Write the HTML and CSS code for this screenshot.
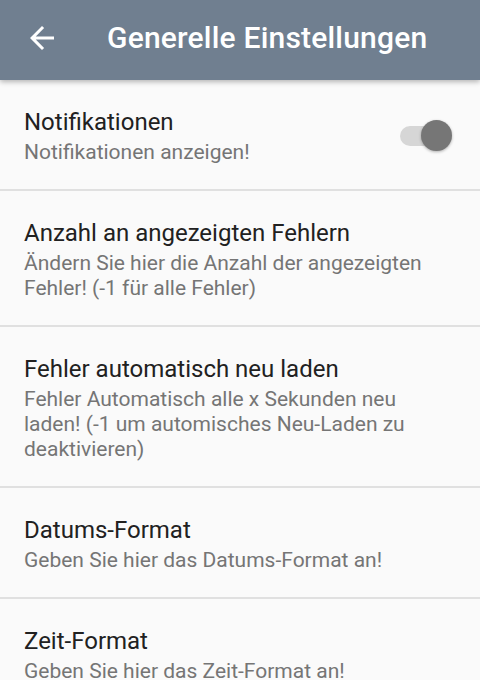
FILE: index.html
```html
<!DOCTYPE html>
<html lang="de">
<head>
<meta charset="utf-8">
<link rel="stylesheet" href="styles.css">
</head>
<body>
<div class="app">
  <header class="toolbar">
    <span class="back">
      <svg width="36" height="36" viewBox="0 0 24 24"><path d="M20 11H7.83l5.59-5.59L12 4l-8 8 8 8 1.41-1.41L7.83 13H20v-2z" fill="#fff"/></svg>
    </span>
    <h1 class="title">Generelle Einstellungen</h1>
  </header>
  <main class="list">
    <div class="item">
      <div class="text">
        <div class="item-title">Notifikationen</div>
        <div class="item-sub">Notifikationen anzeigen!</div>
      </div>
      <div class="switch"><span class="track"></span><span class="thumb"></span></div>
    </div>
    <div class="item">
      <div class="text">
        <div class="item-title">Anzahl an angezeigten Fehlern</div>
        <div class="item-sub">Ändern Sie hier die Anzahl der angezeigten Fehler! (-1 für alle Fehler)</div>
      </div>
    </div>
    <div class="item">
      <div class="text">
        <div class="item-title">Fehler automatisch neu laden</div>
        <div class="item-sub">Fehler Automatisch alle x Sekunden neu laden! (-1 um automisches Neu-Laden zu deaktivieren)</div>
      </div>
    </div>
    <div class="item">
      <div class="text">
        <div class="item-title">Datums-Format</div>
        <div class="item-sub">Geben Sie hier das Datums-Format an!</div>
      </div>
    </div>
    <div class="item">
      <div class="text">
        <div class="item-title">Zeit-Format</div>
        <div class="item-sub">Geben Sie hier das Zeit-Format an!</div>
      </div>
    </div>
  </main>
</div>
</body>
</html>
```
FILE: styles.css
```css
html, body {
  margin: 0;
  padding: 0;
  background: #fafafa;
  font-family: Roboto, "Noto Sans", sans-serif;
}
.app {
  width: 480px;
  height: 680px;
  overflow: hidden;
  display: flex;
  flex-direction: column;
}
.toolbar {
  position: relative;
  z-index: 1;
  height: 80px;
  box-sizing: border-box;
  padding-bottom: 4px;
  flex: none;
  background: #707f90;
  display: flex;
  align-items: center;
  box-shadow: 0 2px 5px rgba(0,0,0,0.28);
}
.back {
  width: 36px;
  height: 36px;
  margin-left: 24px;
  display: flex;
}
.title {
  margin: 0 0 0 47px;
  color: #fff;
  font-size: 30px;
  font-weight: 500;
  line-height: 36px;
  letter-spacing: 0.2px;
}
.list {
  display: flex;
  flex-direction: column;
}
.item {
  display: flex;
  align-items: center;
  padding: 26px 24px 24px 24px;
  border-bottom: 2px solid #e0e0e0;
}
.text {
  flex: 1;
  min-width: 0;
}
.item-title {
  font-size: 24px;
  line-height: 32px;
  color: #212121;
}
.item-sub {
  margin-top: 2px;
  font-size: 21px;
  line-height: 25px;
  color: #757575;
}
.switch {
  position: relative;
  width: 52px;
  height: 34px;
  margin-right: 4px;
  flex: none;
}
.track {
  position: absolute;
  left: 0;
  top: 7px;
  width: 47px;
  height: 20px;
  border-radius: 10px;
  background: #d6d6d6;
}
.thumb {
  position: absolute;
  left: 21px;
  top: 1px;
  width: 31px;
  height: 31px;
  border-radius: 50%;
  background: #767676;
  box-shadow: 0 1px 3px rgba(0,0,0,0.3);
}
```
